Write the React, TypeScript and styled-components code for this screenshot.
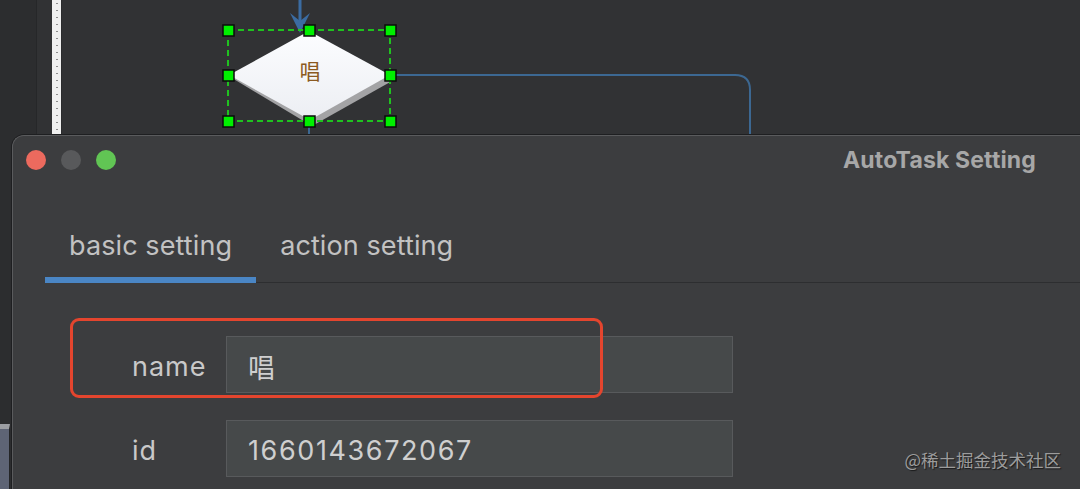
import React from "react";
import styled, { createGlobalStyle } from "styled-components";

const GlobalStyle = createGlobalStyle`
  html, body {
    margin: 0;
    padding: 0;
    background: #313234;
  }
  * {
    box-sizing: border-box;
  }
`;

const handles = [
  [228, 30],
  [309, 30],
  [390, 30],
  [228, 75],
  [390, 75],
  [228, 121],
  [309, 121],
  [390, 121],
];

const tabs = ["basic setting", "action setting"];

const fields = [
  { label: "name", value: "唱" },
  { label: "id", value: "1660143672067" },
];

const Diagram = () => (
  <svg width="100%" height="100%" viewBox="62 0 1018 489">
    <defs>
      <linearGradient id="nodeFill" x1="0" y1="0" x2="0" y2="1">
        <stop offset="0" stopColor="#fcfdff" />
        <stop offset="1" stopColor="#eceef3" />
      </linearGradient>
    </defs>
    <line x1="300" y1="0" x2="300" y2="22" stroke="#3b6ca2" strokeWidth="3" />
    <path d="M290 13 L300 33 L310 13 L300 21 Z" fill="#3b6ca2" />
    <path
      d="M395 75 H735 Q750 75 750 90 V140"
      fill="none"
      stroke="#3c6892"
      strokeWidth="2"
    />
    <line x1="309" y1="121" x2="309" y2="140" stroke="#3c6892" strokeWidth="2" />
    <polygon points="232,78 312,34 392,81 312,126" fill="#a3a3a5" />
    <polygon points="229,75 309,31 390,75 310,120" fill="url(#nodeFill)" />
    <text
      x="310"
      y="79"
      textAnchor="middle"
      fontSize="21"
      fill="#8b5a22"
      fontFamily="'Noto Sans CJK SC', sans-serif"
    >
      唱
    </text>
    <rect
      x="228"
      y="30"
      width="162"
      height="91"
      fill="none"
      stroke="#1fc21f"
      strokeWidth="2"
      strokeDasharray="6 4"
    />
    {handles.map(([x, y]) => (
      <rect
        key={`${x}-${y}`}
        x={x - 5}
        y={y - 5}
        width="11"
        height="11"
        fill="#00f000"
        stroke="#0b0b0b"
        strokeWidth="1.5"
      />
    ))}
  </svg>
);

const App = () => {
  const active = 0;
  return (
    <>
      <GlobalStyle />
      <Screen>
        <LeftRail>
          <Dock />
        </LeftRail>
        <Gutter />
        <Ruler />
        <Canvas>
          <Diagram />
        </Canvas>

        <Window>
          <TitleBar>
            <Lights>
              <Light color="#ec6a5e" />
              <Light color="#58595b" />
              <Light color="#61c554" />
            </Lights>
            <Title>AutoTask Setting</Title>
          </TitleBar>
          <Body>
            <TabBar>
              {tabs.map((t, i) => (
                <Tab key={t} $active={i === active}>
                  {t}
                </Tab>
              ))}
            </TabBar>
            <Form>
              <Highlight />
              {fields.map((f) => (
                <React.Fragment key={f.label}>
                  <Label>{f.label}</Label>
                  <Field readOnly defaultValue={f.value} />
                </React.Fragment>
              ))}
            </Form>
          </Body>
        </Window>

        <Watermark>@稀土掘金技术社区</Watermark>
      </Screen>
    </>
  );
};

const Screen = styled.div`
  position: relative;
  width: 1080px;
  height: 489px;
  overflow: hidden;
  display: flex;
  background: #313234;
  font-family: Inter, "Noto Sans CJK SC", sans-serif;
`;

const LeftRail = styled.div`
  width: 37px;
  display: flex;
  flex-direction: column;
  background: #2c2d2f;
  border-right: 1px solid #262729;
`;

const Dock = styled.div`
  margin-top: auto;
  width: 10px;
  height: 65px;
  background: #5e6475;
  border-top: 5px solid #9c9ea3;
  border-right: 1px solid #242527;
`;

const Gutter = styled.div`
  width: 15px;
  background: #313234;
`;

const Ruler = styled.div`
  width: 10px;
  background-color: #f0f0f0;
  background-image: radial-gradient(circle, #8d8d8d 0.7px, transparent 1.1px);
  background-size: 10px 7px;
  border-right: 1px solid #2a2b2d;
`;

const Canvas = styled.div`
  flex: 1;
  svg {
    display: block;
  }
`;

const Window = styled.section`
  position: absolute;
  left: 12px;
  top: 135px;
  right: 0;
  bottom: -12px;
  background: #3c3d3f;
  border-top: 1px solid #5a5b5d;
  border-left: 1px solid #5a5b5d;
  border-top-left-radius: 12px;
  box-shadow: 0 -1px 0 #1e1f21, -1px 0 0 #1e1f21;
  display: flex;
  flex-direction: column;
`;

const TitleBar = styled.header`
  height: 48px;
  display: flex;
  align-items: center;
  justify-content: space-between;
  padding: 0 44px 0 13px;
`;

const Lights = styled.div`
  display: flex;
  gap: 15px;
`;

const Light = styled.span<{ color: string }>`
  width: 20px;
  height: 20px;
  border-radius: 50%;
  background: ${(p) => p.color};
`;

const Title = styled.h1`
  margin: 0;
  font-size: 23px;
  font-weight: 700;
  color: #a7a7a7;
  letter-spacing: 0.15px;
`;

const Body = styled.div`
  padding-left: 32px;
  display: flex;
  flex-direction: column;
`;

const TabBar = styled.nav`
  margin-top: 42px;
  display: flex;
  box-shadow: inset 0 -1px 0 #2d2e30;
`;

const Tab = styled.div<{ $active: boolean }>`
  padding: 0 24px 11px;
  line-height: 40px;
  font-size: 27px;
  letter-spacing: 0.1px;
  color: #c2c2c2;
  white-space: nowrap;
  border-bottom: 6px solid ${(p) => (p.$active ? "#4a86c5" : "transparent")};
`;

const Form = styled.div`
  position: relative;
  margin: 53px 0 0 87px;
  display: grid;
  grid-template-columns: 94px 507px;
  grid-auto-rows: 57px;
  row-gap: 27px;
`;

const Highlight = styled.div`
  position: absolute;
  left: -62px;
  top: -18px;
  width: 533px;
  height: 80px;
  border: 3px solid #e4452e;
  border-radius: 9px;
  pointer-events: none;
  z-index: 1;
`;

const Label = styled.label`
  display: flex;
  align-items: center;
  padding-top: 3px;
  font-size: 27px;
  letter-spacing: 1px;
  color: #c9c9c9;
`;

const Field = styled.input`
  width: 100%;
  height: 100%;
  margin: 0;
  padding: 3px 0 0 21px;
  background: #46494a;
  border: 1px solid #585a5c;
  outline: none;
  font-family: Inter, "Noto Sans CJK SC", sans-serif;
  font-size: 27px;
  letter-spacing: 1.6px;
  color: #cfcfcf;
`;

const Watermark = styled.div`
  position: absolute;
  right: 19px;
  bottom: 17px;
  line-height: 24px;
  font-size: 17.5px;
  color: #9c9c9c;
  text-shadow: 1px 1px 1px rgba(0, 0, 0, 0.6);
  font-family: "Noto Sans CJK SC", sans-serif;
`;

export default App;
